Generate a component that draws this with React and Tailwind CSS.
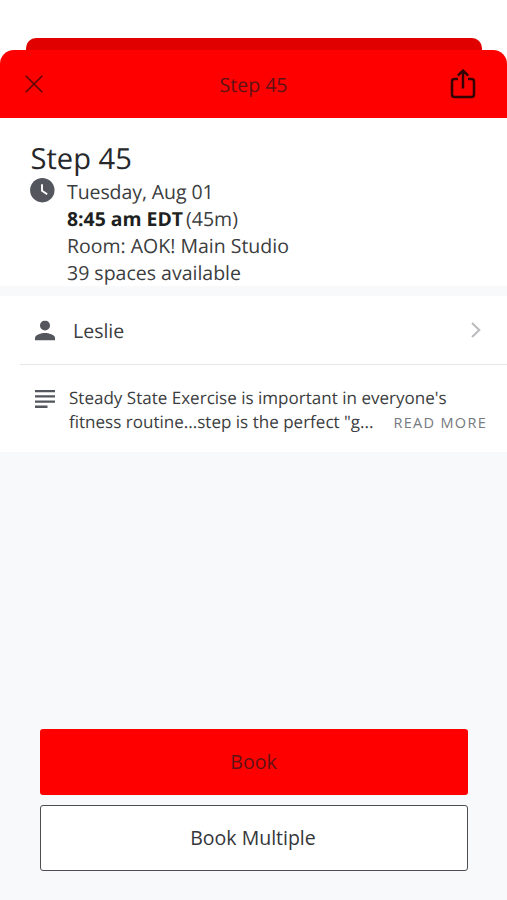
const BackSheet = () => {
  return (
    <div className="mx-auto h-3 w-[456px] rounded-t-[10px] bg-[#e00000]"></div>
  );
};

const Header = ({ title }) => {
  return (
    <header className="flex h-[68px] items-center justify-between rounded-t-[14px] bg-[#ff0000] pl-[25px] pr-[31px]">
      <button aria-label="Close" className="w-[32px]">
        <CloseIcon />
      </button>
      <h2 className="pt-px text-[19.5px] text-[#5f1216]">{title}</h2>
      <button aria-label="Share">
        <ShareIcon />
      </button>
    </header>
  );
};

const ClassDetails = () => {
  return (
    <section className="h-[168px] bg-white px-[30px] pt-[21px]">
      <h1 className="pl-[0.5px] text-[29.1px] leading-[39px] text-[#26282b]">
        Step 45
      </h1>
      <div className="flex flex-row gap-[12px]">
        <ClockIcon />
        <ul className="text-[19.5px] leading-[27px] text-[#3b3d40]">
          <li className="tracking-[-0.08px]">Tuesday, Aug 01</li>
          <li>
            <span className="mr-[3px] text-[19.4px] font-bold text-[#1d1f21]">
              8:45 am EDT
            </span>
            (45m)
          </li>
          <li>Room: AOK! Main Studio</li>
          <li>39 spaces available</li>
        </ul>
      </div>
    </section>
  );
};

const InstructorRow = ({ name }) => {
  return (
    <div className="flex h-[68px] items-center bg-white pl-[35px] pr-[26px]">
      <PersonIcon />
      <p className="ml-[18px] flex-1 pt-[2px] text-[19.5px] text-[#3b3d40]">
        {name}
      </p>
      <ChevronIcon />
    </div>
  );
};

const Description = () => {
  return (
    <div className="bg-white">
      <div className="ml-5 flex h-[88px] border-t border-[#e6e7e8] pl-[15px] pr-[20px] pt-[20px]">
        <LinesIcon />
        <div className="ml-[14px] flex-1 text-[17.05px] leading-[25px] text-[#3b3d40]">
          <p className="whitespace-nowrap">
            Steady State Exercise is important in everyone's
          </p>
          <div className="flex justify-between whitespace-nowrap">
            <p className="-mt-px">fitness routine...step is the perfect "g...</p>
            <button className="text-[14.5px] tracking-[1.3px] text-[#76797d]">
              READ MORE
            </button>
          </div>
        </div>
      </div>
    </div>
  );
};

const BookingActions = () => {
  return (
    <footer className="mt-auto flex flex-col gap-[10px] pb-[29px] pl-10 pr-[39px] text-[19.5px]">
      <button className="h-[66px] rounded-[3px] bg-[#ff0000] pr-px text-[#5f1216]">
        Book
      </button>
      <button className="h-[66px] rounded-[3px] border border-[#4c4e52] bg-white pr-[2px] text-[#34363a]">
        Book Multiple
      </button>
    </footer>
  );
};

const CloseIcon = () => (
  <svg width="18" height="18" viewBox="0 0 18 18" fill="none">
    <path d="M0.7 0.7L17.3 17.3M17.3 0.7L0.7 17.3" stroke="#5a0808" strokeWidth="1.6" />
  </svg>
);

const ShareIcon = () => (
  <svg width="26" height="30" viewBox="0 0 26 30" fill="none">
    <path
      d="M8 10H4.5Q2 10 2 12.5V25.5Q2 28 4.5 28H21.5Q24 28 24 25.5V12.5Q24 10 21.5 10H18M13 19.5V1.8M7.8 6.7L13 1.6L18.2 6.7"
      stroke="#330303"
      strokeWidth="2.5"
    />
  </svg>
);

const ClockIcon = () => (
  <svg width="25" height="25" viewBox="0 0 25 25" fill="none" className="shrink-0">
    <circle cx="12.3" cy="12.2" r="12.2" fill="#53565d" />
    <path d="M12 6.2V12.7L17.2 16.2" stroke="#fff" strokeWidth="1.9" />
  </svg>
);

const PersonIcon = () => (
  <svg width="20" height="20" viewBox="0 0 20 20" fill="#53565d" className="translate-y-[0.5px]">
    <circle cx="10" cy="5" r="5" />
    <path d="M0 20V17.5C0 14.2 6.6 12.5 10 12.5S20 14.2 20 17.5V20Z" />
  </svg>
);

const LinesIcon = () => (
  <svg width="20" height="18" viewBox="0 0 20 18" fill="#53565d" className="mt-[4.5px] shrink-0">
    <path d="M0 0H20V2.3H0ZM0 5.2H20V7.5H0ZM0 10.4H20V12.7H0ZM0 15.6H12.5V17.9H0Z" />
  </svg>
);

const ChevronIcon = () => (
  <svg width="10" height="16" viewBox="0 0 10 16" fill="none">
    <path d="M1 1L8.3 8L1 15" stroke="#b9babc" strokeWidth="2" />
  </svg>
);

const App = () => {
  return (
    <main className="flex h-[900px] w-[507px] flex-col overflow-hidden bg-white pt-[38px] font-['Open_Sans',sans-serif] [text-rendering:geometricPrecision]">
      <BackSheet />
      <Header title="Step 45" />
      <div className="flex flex-1 flex-col bg-[#f7f9fb]">
        <ClassDetails />
        <div className="h-[10px] bg-[#f8f9fa]"></div>
        <InstructorRow name="Leslie" />
        <Description />
        <BookingActions />
      </div>
    </main>
  );
};

export default App;
